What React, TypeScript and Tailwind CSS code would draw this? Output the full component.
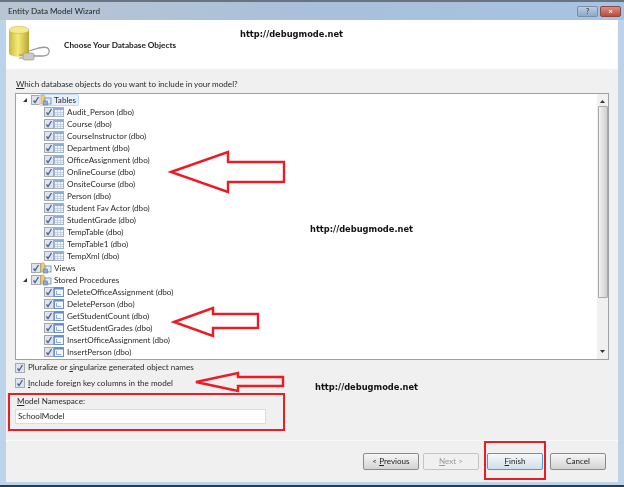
import React from "react";

const tables = [
  "Audit_Person (dbo)",
  "Course (dbo)",
  "CourseInstructor (dbo)",
  "Department (dbo)",
  "OfficeAssignment (dbo)",
  "OnlineCourse (dbo)",
  "OnsiteCourse (dbo)",
  "Person (dbo)",
  "Student Fav Actor (dbo)",
  "StudentGrade (dbo)",
  "TempTable (dbo)",
  "TempTable1 (dbo)",
  "TempXml (dbo)",
];

const procs = [
  "DeleteOfficeAssignment (dbo)",
  "DeletePerson (dbo)",
  "GetStudentCount (dbo)",
  "GetStudentGrades (dbo)",
  "InsertOfficeAssignment (dbo)",
  "InsertPerson (dbo)",
];

function Check() {
  return (
    <span className="flex h-[10px] w-[10px] shrink-0 items-center justify-center border border-[#a9a9a9] bg-[#dfe4ec]">
      <svg width="8" height="8" viewBox="0 0 8 8">
        <path d="M1.5 4.5 L3 6.5 L6.5 1" fill="none" stroke="#3f5f9f" strokeWidth="1.3" />
      </svg>
    </span>
  );
}

function TableIcon() {
  return (
    <svg width="10" height="10" viewBox="0 0 10 10" className="shrink-0">
      <rect x="0.5" y="0.5" width="9" height="9" fill="#f2f5fa" stroke="#9fb3d0" />
      <rect x="1" y="1" width="8" height="2" fill="#8fadd9" />
      <path d="M1 5.5H9M1 7.5H9M3.5 3V9M6.5 3V9" stroke="#b5c4da" strokeWidth="0.7" />
    </svg>
  );
}

function ProcIcon() {
  return (
    <svg width="10" height="10" viewBox="0 0 10 10" className="shrink-0">
      <rect x="0.5" y="0.5" width="9" height="9" fill="#f5f8fc" stroke="#6f92c6" />
      <rect x="1" y="1" width="8" height="1.5" fill="#5f8ccc" />
      <path d="M2.5 4V7.5H7" fill="none" stroke="#7d9fd3" strokeWidth="0.9" />
    </svg>
  );
}

function FolderIcon() {
  return (
    <svg width="12" height="12" viewBox="0 0 12 12" className="relative shrink-0">
      <path d="M1 1H4L5 3V10H1Z" fill="#f3cf6b" stroke="#c9a23e" strokeWidth="0.6" />
      <rect x="5" y="4" width="6" height="6" fill="#e6eef9" stroke="#5c86c4" strokeWidth="0.8" />
      <rect x="3.5" y="7" width="4" height="4" fill="#8aaddc" stroke="#4d78b8" strokeWidth="0.6" />
    </svg>
  );
}

function Expander() {
  return (
    <svg width="6" height="6" viewBox="0 0 6 6" className="shrink-0">
      <path d="M5 1V5H1Z" fill="#333" />
    </svg>
  );
}

function GroupRow({ label, open, selected }: { label: string; open?: boolean; selected?: boolean }) {
  return (
    <div className="flex h-[12px] items-center pl-[6px]">
      <span className="flex w-[9px] shrink-0">{open && <Expander />}</span>
      <Check />
      <span className={`flex items-center ${selected ? "-ml-[2px] h-[12px] rounded-[2px] border border-[#c4dcf3] bg-[#e6f0fb] pr-[2px]" : "-ml-[1px]"}`}>
        <FolderIcon />
        <span className="ml-[2px]">{label}</span>
      </span>
    </div>
  );
}

function ChildRow({ label, proc }: { label: string; proc?: boolean }) {
  return (
    <div className="flex h-[12px] items-center pl-[28px]">
      <Check />
      {proc ? <ProcIcon /> : <TableIcon />}
      <span className="ml-[3px]">{label}</span>
    </div>
  );
}

function WizardButton({ children, disabled, active }: { children: React.ReactNode; disabled?: boolean; active?: boolean }) {
  let cls = "border-[#8a8a8a] bg-gradient-to-b from-[#f6f6f6] to-[#d4d4d4] text-[#222]";
  if (disabled) cls = "border-[#c4c4c4] bg-[#f0f0f0] text-[#9a9a9a]";
  if (active) cls = "border-[#3fa2d4] bg-gradient-to-b from-[#f4f9fc] to-[#d2dfe8] text-[#222]";
  return (
    <div className={`flex h-[17px] w-[56px] items-center justify-center rounded-[2px] border ${cls}`}>
      <span className="whitespace-pre">{children}</span>
    </div>
  );
}

function Arrow({ points }: { points: string }) {
  return (
    <svg className="absolute left-0 top-0" width="624" height="487" viewBox="0 0 624 487">
      <polygon points={points} fill="none" stroke="#ed1c24" strokeWidth="2.4" />
    </svg>
  );
}

function Watermark({ className }: { className: string }) {
  return (
    <div className={`absolute font-['DejaVu_Sans',sans-serif] text-[8.3px] font-bold leading-none text-[#111] ${className}`}>
      http://debugmode.net
    </div>
  );
}

export default function App() {
  return (
    <div className="relative h-[487px] w-[624px] overflow-hidden bg-[#bcd3ea] font-['Lato','Open_Sans',sans-serif] text-[8.1px] text-[#2a2a2a] blur-[0.3px]">
      <div className="flex h-full flex-col border-t-2 border-b-2 border-t-[#6a7480] border-b-[#1f3f55] pb-[3px]">
        {/* title bar */}
        <div className="flex h-[18px] shrink-0 items-center justify-between bg-gradient-to-r from-[#b9c5d2] via-[#a9c0da] to-[#a6c4e2] pl-[8px] pr-[3px]">
          <span className="text-[#222]">Entity Data Model Wizard</span>
          <div className="flex gap-[2px]">
            <div className="flex h-[11px] w-[21px] items-center justify-center rounded-[2px] border border-[#7b8ea5] bg-gradient-to-b from-[#b9cde2] to-[#8ea9c7] text-[8px] font-bold leading-none text-[#555]">
              ?
            </div>
            <div className="flex h-[11px] w-[21px] items-center justify-center rounded-[2px] border border-[#8a4a44] bg-gradient-to-b from-[#dd8f80] to-[#bb4a3c] text-[8px] font-bold leading-none text-white">
              ×
            </div>
          </div>
        </div>

        {/* client area */}
        <div className="mx-[6px] flex min-h-0 flex-1 flex-col bg-[#f0f0f0]">
          <div className="flex h-[49px] shrink-0 items-center bg-white pl-[3px]">
            <svg width="44" height="38" viewBox="0 0 44 38" className="shrink-0">
              <defs>
                <linearGradient id="db" x1="0" x2="1" y1="0" y2="0">
                  <stop offset="0" stopColor="#c9b83a" />
                  <stop offset="0.45" stopColor="#f6ea7c" />
                  <stop offset="1" stopColor="#b8a52e" />
                </linearGradient>
              </defs>
              <path d="M0 4V27C0 32 20 32 20 27V4Z" fill="url(#db)" />
              <ellipse cx="10" cy="4" rx="10" ry="3.6" fill="#f3e88e" stroke="#c9b83a" strokeWidth="0.6" />
              <path d="M24 30H34C39 30 41 27 40 24C39 21 34 21 30 22L20 25" fill="none" stroke="#9a9a9a" strokeWidth="1.3" />
              <rect x="14" y="27" width="11" height="7" rx="1.5" fill="#c9c9c9" stroke="#8a8a8a" strokeWidth="0.6" />
              <path d="M14 29H10M14 32H10" stroke="#8a8a8a" strokeWidth="1.2" />
            </svg>
            <span className="ml-[11px] mt-[2px] text-[8.2px] font-bold text-[#222]">Choose Your Database Objects</span>
          </div>

          <div className="flex min-h-0 flex-1 flex-col px-[9px]">
            <div className="mt-[8px] h-[14px] pl-[1px] leading-[14px]">
              <u>W</u>hich database objects do you want to include in your model?
            </div>

            {/* tree */}
            <div className="mt-[2px] flex h-[267px] shrink-0 border border-[#a0a0a0] bg-white">
              <div className="min-w-0 flex-1 leading-none">
                <GroupRow label="Tables" open selected />
                {tables.map((t) => (
                  <ChildRow key={t} label={t} />
                ))}
                <GroupRow label="Views" />
                <GroupRow label="Stored Procedures" open />
                {procs.map((p) => (
                  <ChildRow key={p} label={p} proc />
                ))}
              </div>
              <div className="flex w-[11px] shrink-0 flex-col items-center bg-[#f0f0f0]">
                <svg width="5" height="5" viewBox="0 0 5 5" className="mt-[5px]">
                  <path d="M2.5 1L5 4H0Z" fill="#333" />
                </svg>
                <div className="mt-[2px] h-[192px] w-[10px] rounded-[1px] border border-[#a8a8a8] bg-gradient-to-r from-[#f2f2f2] to-[#cfcfcf]" />
                <svg width="5" height="5" viewBox="0 0 5 5" className="mt-auto mb-[5px]">
                  <path d="M2.5 4L5 1H0Z" fill="#333" />
                </svg>
              </div>
            </div>

            <div className="flex h-[15px] items-center gap-[3px]">
              <Check />
              <span>Pluralize or <u>s</u>ingularize generated object names</span>
            </div>
            <div className="flex h-[16px] items-center gap-[3px]">
              <Check />
              <span><u>I</u>nclude foreign key columns in the model</span>
            </div>
            <div className="mt-[4px] h-[12px] pl-[2px] leading-[12px]">
              <u>M</u>odel Namespace:
            </div>
            <div className="mt-[2px] flex h-[15px] w-[251px] items-center border border-[#dcdcdc] bg-white pl-[2px]">
              SchoolModel
            </div>
          </div>

          <div className="h-[42px] shrink-0 border-t border-[#fafafa]">
            <div className="mr-[12px] mt-[12px] flex justify-end">
              <WizardButton>{"< "}<u>P</u>revious</WizardButton>
              <div className="ml-[4px]">
                <WizardButton disabled><u>N</u>ext {">"}</WizardButton>
              </div>
              <div className="ml-[8px]">
                <WizardButton active><u>F</u>inish</WizardButton>
              </div>
              <div className="ml-[7px]">
                <WizardButton>Cancel</WizardButton>
              </div>
            </div>
          </div>
        </div>
      </div>

      {/* annotations pasted over the screenshot */}
      <Watermark className="left-[240px] top-[30px]" />
      <Watermark className="left-[310px] top-[225px]" />
      <Watermark className="left-[315px] top-[383px]" />
      <Arrow points="171,172 228,152 228,162 284,162 284,182 228,182 228,192" />
      <Arrow points="174,322 213,308 213,314 258,314 258,328 213,328 213,336" />
      <Arrow points="196,382 238,373 238,377 283,377 283,386 238,386 238,391" />
      <div className="absolute left-[8px] top-[393px] h-[38px] w-[277px] border-[2.5px] border-[#ed1c24]" />
      <div className="absolute left-[484px] top-[441px] h-[39px] w-[62px] border-[2.5px] border-[#ed1c24]" />
    </div>
  );
}
